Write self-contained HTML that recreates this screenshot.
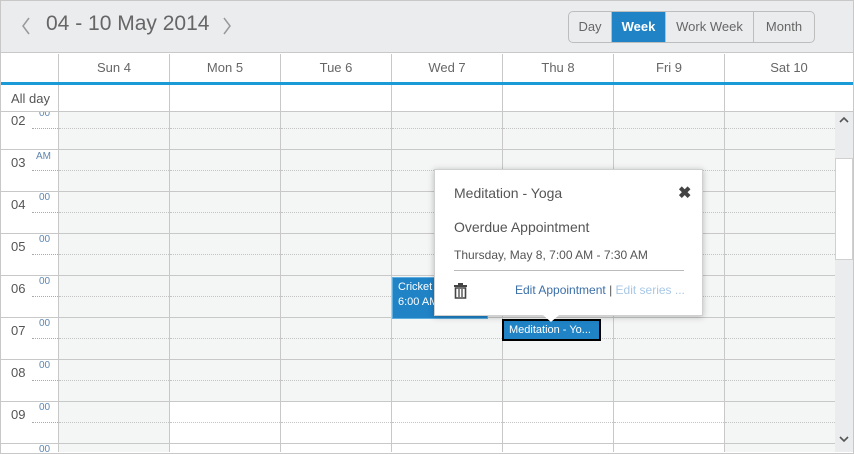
<!DOCTYPE html>
<html><head><meta charset="utf-8"><style>
*{box-sizing:border-box;margin:0;padding:0}
html,body{width:854px;height:454px;overflow:hidden}
body{background:#fff;font-family:"Liberation Sans",sans-serif;color:#555;position:relative}
.abs{position:absolute}
.frame{left:0;top:0;width:854px;height:454px;border:1px solid #c8c8c8}
.tb{left:1px;top:1px;width:852px;height:52px;background:#ebecee;border-bottom:1px solid #c8c8c8}
.title{left:46px;top:12px;font-size:21px;color:#666}
.btns{left:568px;top:11px;height:32px;width:247px;border:1px solid #bdbdbd;border-radius:5px;overflow:hidden;display:flex;background:#ebecee}
.btns div{font-size:13px;color:#666;line-height:30px;text-align:center;border-right:1px solid #bdbdbd}
.btns div:last-child{border-right:none}
.btns .on{background:#1f83c6;color:#fff;font-weight:bold}
.hd{top:54px;height:28px;font-size:13px;color:#666;text-align:center;line-height:28px;border-left:1px solid #c8c8c8}
.blue{left:1px;top:82px;width:852px;height:3px;background:#1a9ad6}
.ad{top:85px;height:27px;border-left:1px solid #c8c8c8;border-bottom:1px solid #c8c8c8}
.body{left:1px;top:112px;width:834px;height:340px;overflow:hidden}
.cell{position:absolute;height:42px;border-left:1px solid #c8c8c8;border-bottom:1px solid #c8c8c8}
.cell:after{content:"";position:absolute;left:0;right:0;top:20px;border-top:1px dotted #c4c4c4}
.sh{background:#f4f5f5}
.hl{position:absolute;left:10px;font-size:13px;color:#555}
.mn{position:absolute;left:38px;font-size:10px;color:#5d86b0}
.tl{position:absolute;left:0;width:57px;height:42px;border-bottom:1px solid #c8c8c8}
.tl:after{content:"";position:absolute;left:31px;right:0;top:20px;border-top:1px dotted #aaa}
.sb{left:835px;top:112px;width:18px;height:340px;background:#ebecee}
.thumb{left:835px;top:158px;width:18px;height:102px;background:#fff;border:1px solid #d0d0d0}
.ev{background:#1f83c6;color:#fff;font-size:11px;line-height:15px;white-space:nowrap;overflow:hidden}
.pop{left:434px;top:169px;width:269px;height:147px;background:#fff;border:1px solid #d0d0d0;box-shadow:0 1px 6px rgba(0,0,0,.25)}
</style></head><body>
<div class="abs frame"></div>
<div class="abs tb"></div>
<svg class="abs" style="left:21px;top:17px" width="10" height="18" viewBox="0 0 10 18"><path d="M8 1L2 9l6 8" fill="none" stroke="#999" stroke-width="1.5"/></svg>
<div class="abs title">04 - 10 May 2014</div>
<svg class="abs" style="left:222px;top:17px" width="10" height="18" viewBox="0 0 10 18"><path d="M2 1l6 8-6 8" fill="none" stroke="#999" stroke-width="1.5"/></svg>
<div class="abs btns"><div style="width:43px">Day</div><div class="on" style="width:54px">Week</div><div style="width:88px">Work Week</div><div style="width:60px">Month</div></div>

<div class="abs hd" style="left:58px;width:111px">Sun 4</div>
<div class="abs hd" style="left:169px;width:111px">Mon 5</div>
<div class="abs hd" style="left:280px;width:111px">Tue 6</div>
<div class="abs hd" style="left:391px;width:111px">Wed 7</div>
<div class="abs hd" style="left:502px;width:111px">Thu 8</div>
<div class="abs hd" style="left:613px;width:111px">Fri 9</div>
<div class="abs hd" style="left:724px;width:129px">Sat 10</div>
<div class="abs blue"></div>
<div class="abs" style="left:1px;top:85px;width:57px;height:27px;border-bottom:1px solid #c8c8c8;font-size:13px;color:#555;padding:6px 0 0 10px">All day</div>
<div class="abs ad" style="left:58px;width:111px"></div>
<div class="abs ad" style="left:169px;width:111px"></div>
<div class="abs ad" style="left:280px;width:111px"></div>
<div class="abs ad" style="left:391px;width:111px"></div>
<div class="abs ad" style="left:502px;width:111px"></div>
<div class="abs ad" style="left:613px;width:111px"></div>
<div class="abs ad" style="left:724px;width:129px"></div>

<div class="abs body">
<div class="tl" style="top:-4px"><span class="hl" style="top:5px">02</span><span class="mn" style="top:0px">00</span></div>
<div class="tl" style="top:38px"><span class="hl" style="top:5px">03</span><span class="mn" style="top:1px;left:35px">AM</span></div>
<div class="tl" style="top:80px"><span class="hl" style="top:5px">04</span><span class="mn" style="top:0px">00</span></div>
<div class="tl" style="top:122px"><span class="hl" style="top:5px">05</span><span class="mn" style="top:0px">00</span></div>
<div class="tl" style="top:164px"><span class="hl" style="top:5px">06</span><span class="mn" style="top:0px">00</span></div>
<div class="tl" style="top:206px"><span class="hl" style="top:5px">07</span><span class="mn" style="top:0px">00</span></div>
<div class="tl" style="top:248px"><span class="hl" style="top:5px">08</span><span class="mn" style="top:0px">00</span></div>
<div class="tl" style="top:290px"><span class="hl" style="top:5px">09</span><span class="mn" style="top:0px">00</span></div>
<div class="tl" style="top:332px"><span class="hl" style="top:5px">10</span><span class="mn" style="top:0px">00</span></div>
<div id="g"></div>
</div>
<script>
var g=document.getElementById('g'),h='';
for(var r=0;r<9;r++){for(var c=0;c<7;c++){var sh=(c==0||c==6||r<7)?' sh':'';
h+='<div class="cell'+sh+'" style="top:'+(-4+r*42)+'px;left:'+(57+c*111)+'px;width:111px"></div>';}}
g.innerHTML=h;
</script>
<div class="abs sb"></div>
<div class="abs thumb"></div>
<svg class="abs" style="left:839px;top:116px" width="10" height="7" viewBox="0 0 10 7"><path d="M1 6l4-4 4 4" fill="none" stroke="#555" stroke-width="1.6"/></svg>
<svg class="abs" style="left:839px;top:436px" width="10" height="7" viewBox="0 0 10 7"><path d="M1 1l4 4 4-4" fill="none" stroke="#555" stroke-width="1.6"/></svg>

<div class="abs ev" style="left:392px;top:277px;width:96px;height:42px;padding:2px 5px;border:1px solid #5eaee0">Cricket T<br>6:00 AM</div>
<div class="abs ev" style="left:502px;top:319px;width:99px;height:22px;border:2px solid #000;padding:2px 5px">Meditation - Yo...</div>

<div class="abs pop">
<div class="abs" style="left:19px;top:15px;font-size:14px;color:#555">Meditation - Yoga</div>
<div class="abs" style="left:243px;top:13px;font-size:16px;color:#444;font-weight:bold">&#x2716;</div>
<div class="abs" style="left:19px;top:49px;font-size:14px;color:#555">Overdue Appointment</div>
<div class="abs" style="left:19px;top:78px;font-size:12px;color:#555">Thursday, May 8, 7:00 AM - 7:30 AM</div>
<div class="abs" style="left:19px;top:100px;width:230px;border-top:1px solid #bbb"></div>
<svg class="abs" style="left:19px;top:113px" width="13" height="16" viewBox="0 0 13 16"><rect x="0" y="2" width="13" height="2" fill="#444"/><rect x="4" y="0" width="5" height="2" fill="#444"/><path d="M1.5 5h10v10h-10z" fill="none" stroke="#444" stroke-width="1.6"/><path d="M5 6v8M8 6v8" stroke="#444" stroke-width="1.3"/></svg>
<div class="abs" style="left:80px;top:113px;font-size:12px;color:#3b6fa8">Edit Appointment <span style="color:#555">|</span> <span style="color:#a8c8e6">Edit series ...</span></div>
</div>
<div class="abs" style="left:543px;top:315px;width:0;height:0;border-left:8px solid transparent;border-right:8px solid transparent;border-top:7px solid #fff"></div>
</body></html>
